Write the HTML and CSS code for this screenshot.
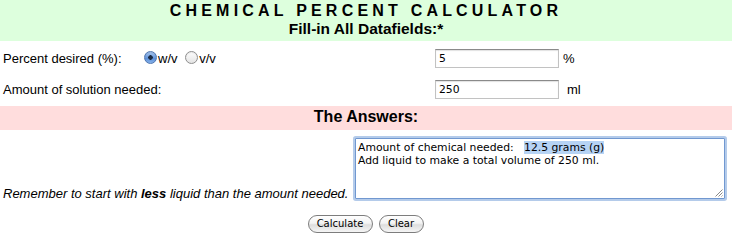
FILE: index.html
```html
<!DOCTYPE html>
<html>
<head>
<meta charset="utf-8">
<link rel="stylesheet" href="styles.css">
</head>
<body>
<div class="header">
  <div class="title">CHEMICAL PERCENT CALCULATOR</div>
  <div class="subtitle">Fill-in All Datafields:*</div>
</div>
<div class="fields">
  <div class="row">
    <div class="label label-radios">
      <span class="label-text">Percent desired (%):</span>
      <span class="radios"><label><input type="radio" name="type" class="radio" checked>w/v</label> <label><input type="radio" name="type" class="radio radio-second">v/v</label></span>
    </div>
    <div class="entry"><input class="num" type="text" value="5"><span class="unit">%</span></div>
  </div>
  <div class="row">
    <div class="label">Amount of solution needed:</div>
    <div class="entry"><input class="num" type="text" value="250"><span class="unit unit-ml">ml</span></div>
  </div>
</div>
<div class="answers-bar">The Answers:</div>
<div class="answer">
  <div class="note">Remember to start with <b>less</b> liquid than the amount needed.</div>
  <div class="result" role="textbox">Amount of chemical needed:   <span class="sel">12.5 grams (g)</span>
Add liquid to make a total volume of 250 ml.<svg class="grip" width="9" height="9" viewBox="0 0 9 9"><path d="M8.5 1.5 L1.5 8.5 M8.5 4.5 L4.5 8.5 M8.5 7.5 L7.5 8.5" stroke="#8a8a8a" stroke-width="1" fill="none"/></svg></div>
</div>
<div class="buttons">
  <button class="btn btn-calc">Calculate</button>
  <button class="btn btn-clear">Clear</button>
</div>
</body>
</html>
```
FILE: styles.css
```css
html, body {
  margin: 0;
  padding: 0;
  background: #ffffff;
}
body {
  width: 732px;
  height: 245px;
  overflow: hidden;
  font-family: "Liberation Sans", Arial, sans-serif;
  font-size: 13px;
  color: #000;
}
.header {
  background: #ddffdd;
  height: 41px;
  box-sizing: border-box;
  padding-top: 2px;
  text-align: center;
  font-weight: bold;
}
.title {
  font-size: 16px;
  line-height: 18px;
  letter-spacing: 4.2px;
}
.subtitle {
  font-size: 15.5px;
  line-height: 18px;
}
.fields {
  display: flex;
  flex-direction: column;
  gap: 12px;
  padding: 8px 0 7px;
}
.row {
  display: grid;
  grid-template-columns: 435px auto;
  align-items: center;
  height: 19px;
}
.label {
  padding-left: 3px;
  line-height: 15px;
  white-space: nowrap;
}
.label-radios {
  display: grid;
  grid-template-columns: 138px auto;
}
.radios label {
  white-space: nowrap;
}
.radio {
  appearance: none;
  -webkit-appearance: none;
  display: inline-block;
  width: 13px;
  height: 13px;
  margin: 0 1px 0 3px;
  padding: 0;
  border-radius: 50%;
  box-sizing: border-box;
  vertical-align: -1px;
  border: 1px solid #8e8e8e;
  background: linear-gradient(#fdfdfd, #e4e4e4);
  box-shadow: inset 0 1px 1px rgba(0,0,0,0.08);
}
.radio-second {
  margin-left: 4px;
}
.radio:checked {
  border-color: #4f76b0;
  background:
    radial-gradient(circle at 50% 50%, #1b2b44 0, #1b2b44 2px, transparent 2.5px),
    linear-gradient(#a9c9f2, #5d90d8 60%, #86b2ea);
}
.entry {
  display: flex;
  align-items: center;
  line-height: 15px;
}
.num {
  appearance: none;
  -webkit-appearance: none;
  width: 124px;
  height: 19px;
  box-sizing: border-box;
  margin: 0;
  padding: 0 3px;
  border: 1px solid #c2c2c2;
  border-top-color: #8a8a8a;
  box-shadow: inset 0 1px 1px rgba(0,0,0,0.12);
  border-radius: 0;
  font-family: "DejaVu Sans", Verdana, sans-serif;
  font-size: 10.8px;
  color: #000;
  background: #fff;
}
.unit {
  margin-left: 4px;
}
.unit-ml {
  margin-left: 8px;
}
.answers-bar {
  background: #ffdddd;
  height: 24px;
  box-sizing: border-box;
  line-height: 22px;
  text-align: center;
  font-weight: bold;
  font-size: 16px;
}
.answer {
  display: grid;
  grid-template-columns: 355px 370px;
  align-items: end;
  padding-top: 8px;
}
.note {
  font-style: italic;
  padding-left: 3px;
  line-height: 13px;
  margin-bottom: -1px;
  white-space: nowrap;
}
.result {
  position: relative;
  height: 61px;
  box-sizing: border-box;
  border: 1px solid #7198d0;
  box-shadow: 0 0 0 2px #b4cbea;
  border-radius: 1px;
  padding: 2px 2px;
  font-family: "DejaVu Sans", Verdana, sans-serif;
  font-size: 10.8px;
  line-height: 13px;
  white-space: pre;
  background: #fff;
}
.sel {
  background: #b6d3f4;
}
.grip {
  position: absolute;
  right: 1px;
  bottom: 1px;
}
.buttons {
  display: flex;
  justify-content: center;
  gap: 6px;
  padding-top: 16px;
  padding-right: 1px;
}
.btn {
  height: 18px;
  box-sizing: border-box;
  margin: 0;
  padding: 0 8px;
  border: 1px solid #7d7d7d;
  border-radius: 9px;
  background: linear-gradient(#ffffff, #f3f3f3 45%, #dedede 55%, #f5f5f5);
  font-family: "DejaVu Sans", Verdana, sans-serif;
  font-size: 10px;
  line-height: 16px;
  color: #000;
}
.btn-calc {
  width: 65px;
}
.btn-clear {
  width: 45px;
}
```
